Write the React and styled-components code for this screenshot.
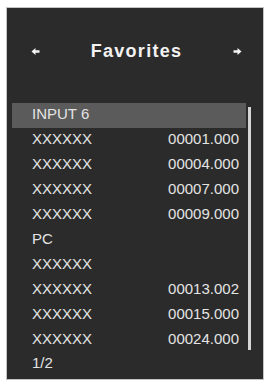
import React from "react";
import styled, { createGlobalStyle } from "styled-components";

const Global = createGlobalStyle`
  html, body { margin: 0; padding: 0; background: #ffffff; }
  body { font-family: "Liberation Sans", Arial, sans-serif; }
`;

const Page = styled.div`
  width: 268px;
  height: 382px;
  padding: 8px 5px 3px 7px;
  box-sizing: border-box;
`;

const Panel = styled.div`
  width: 256px;
  height: 371px;
  background: #2b2b2b;
  outline: 1px solid #c4c4c4;
  display: flex;
  flex-direction: column;
  box-sizing: border-box;
`;

const Header = styled.div`
  height: 95px;
  display: flex;
  align-items: center;
  justify-content: space-between;
  padding: 0 21px 8px 24px;
  box-sizing: border-box;
`;

const Title = styled.div`
  color: #f2f2f2;
  font-size: 18px;
  font-weight: bold;
  letter-spacing: 1.3px;
  margin-left: 0px;
`;

const Arrow = styled.svg`
  width: 9px;
  height: 9px;
  display: block;
`;

const Body = styled.div`
  display: flex;
  padding-left: 5px;
`;

const List = styled.div`
  width: 234px;
  display: flex;
  flex-direction: column;
`;

const Row = styled.div`
  height: 25px;
  display: flex;
  align-items: center;
  justify-content: space-between;
  padding: 0 7px 4px 20px;
  box-sizing: border-box;
  background: ${(p) => (p.$active ? "#5b5b5b" : "transparent")};
  color: #e4e4e4;
  font-size: 15px;
`;

const Footer = styled(Row)`
  height: 22px;
`;

const Scroll = styled.div`
  width: 3px;
  height: 243px;
  margin: 4px 0 0 2px;
  background: #d6d6d6;
`;

const rows = [
  { name: "INPUT 6", active: true },
  { name: "XXXXXX", value: "00001.000" },
  { name: "XXXXXX", value: "00004.000" },
  { name: "XXXXXX", value: "00007.000" },
  { name: "XXXXXX", value: "00009.000" },
  { name: "PC" },
  { name: "XXXXXX" },
  { name: "XXXXXX", value: "00013.002" },
  { name: "XXXXXX", value: "00015.000" },
  { name: "XXXXXX", value: "00024.000" },
];

const LeftArrow = () => (
  <Arrow viewBox="0 0 9 9">
    <path d="M0.5 4.5 L4.5 1 L4.5 3.3 L8.5 3.3 L8.5 5.7 L4.5 5.7 L4.5 8 Z" fill="#f4f4f4" />
  </Arrow>
);

const RightArrow = () => (
  <Arrow viewBox="0 0 9 9">
    <path d="M8.5 4.5 L4.5 1 L4.5 3.3 L0.5 3.3 L0.5 5.7 L4.5 5.7 L4.5 8 Z" fill="#f4f4f4" />
  </Arrow>
);

export default function App() {
  return (
    <>
      <Global />
      <Page>
        <Panel>
          <Header>
            <LeftArrow />
            <Title>Favorites</Title>
            <RightArrow />
          </Header>
          <Body>
            <List>
              {rows.map((r, i) => (
                <Row key={i} $active={r.active}>
                  <span>{r.name}</span>
                  {r.value && <span>{r.value}</span>}
                </Row>
              ))}
              <Footer>
                <span>1/2</span>
              </Footer>
            </List>
            <Scroll />
          </Body>
        </Panel>
      </Page>
    </>
  );
}
